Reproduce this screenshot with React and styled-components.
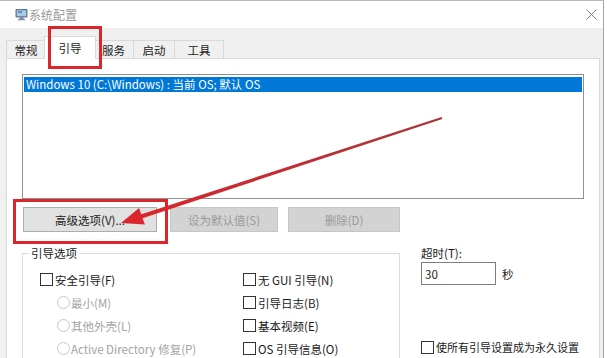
import React from "react";
import styled, { createGlobalStyle } from "styled-components";

const GlobalStyle = createGlobalStyle`
  html, body {
    margin: 0;
    padding: 0;
    background: #fff;
  }
  body {
    font-family: "Noto Sans CJK SC", "Noto Sans", sans-serif;
    font-size: 11.5px;
    color: #1a1a1a;
  }
`;

const Window = styled.div`
  position: relative;
  width: 603px;
  height: 357px;
  border-top: 1px solid #b9b9b9;
  border-right: 1px solid #a3a3a3;
  background: #f0f0f0;
  display: flex;
  flex-direction: column;
  overflow: hidden;
`;

const TitleBar = styled.div`
  height: 27px;
  flex-shrink: 0;
  background: #fff;
  display: flex;
  align-items: center;
  padding: 0 6px 0 15px;
`;

const Title = styled.span`
  flex: 1;
  margin-left: 1px;
  font-size: 12px;
  color: #999;
`;

const Body = styled.div`
  flex: 1;
  display: flex;
  flex-direction: column;
  padding: 8px 3px 0 6px;
  min-height: 0;
`;

const TabStrip = styled.div`
  display: flex;
  align-items: flex-end;
  height: 22px;
  position: relative;
  z-index: 1;
`;

const Tab = styled.div`
  box-sizing: border-box;
  width: ${(p) => p.$w}px;
  height: ${(p) => (p.$active ? 23 : 18)}px;
  margin: ${(p) => (p.$active ? "0 -2px -1px -2px" : "0 0 0 -1px")};
  border: 1px solid #d9d9d9;
  border-bottom: none;
  background: ${(p) => (p.$active ? "#fff" : "#f0f0f0")};
  position: relative;
  z-index: ${(p) => (p.$active ? 2 : 1)};
  display: flex;
  align-items: center;
  justify-content: center;
  padding-bottom: ${(p) => (p.$active ? 1 : 0)}px;
  color: #1a1a1a;
  &:first-child {
    margin-left: 0;
  }
`;

const Page = styled.div`
  flex: 1;
  background: #fff;
  border: 1px solid #d9d9d9;
  padding: 15px;
  display: flex;
  flex-direction: column;
`;

const ListBox = styled.div`
  box-sizing: border-box;
  height: 125px;
  border: 1px solid #8f9197;
  padding: 2px 1px;
  background: #fff;
`;

const ListItem = styled.div`
  height: 15px;
  line-height: 15px;
  padding-left: 2px;
  background: #0078d7;
  color: #fff;
  white-space: nowrap;
`;

const ButtonRow = styled.div`
  display: flex;
  margin-top: 8px;
`;

const Button = styled.div`
  box-sizing: border-box;
  width: ${(p) => p.$w}px;
  height: 25px;
  margin-left: ${(p) => p.$ml}px;
  border: 1px solid ${(p) => (p.$disabled ? "#c6c6c6" : "#adadad")};
  background: ${(p) => (p.$disabled ? "#d3d3d3" : "#e1e1e1")};
  color: ${(p) => (p.$disabled ? "#9a9a9a" : "#1a1a1a")};
  display: flex;
  align-items: center;
  justify-content: center;
`;

const Bottom = styled.div`
  display: grid;
  grid-template-columns: 378px 1fr;
  column-gap: 21px;
  margin-top: 13px;
`;

const GroupBox = styled.fieldset`
  margin: 0;
  padding: 0;
  min-width: 0;
  border: 1px solid #dcdcdc;
`;

const Legend = styled.legend`
  margin-left: 6px;
  padding: 0 2px;
  line-height: 16px;
`;

const Options = styled.div`
  display: grid;
  grid-template-columns: 203px 1fr;
  padding: 7px 0 10px 17px;
`;

const OptionColumn = styled.div`
  display: flex;
  flex-direction: column;
`;

const Option = styled.div`
  display: flex;
  align-items: center;
  height: 23px;
  padding-left: ${(p) => p.$indent || 0}px;
  color: ${(p) => (p.$disabled ? "#a3a3a3" : "#1a1a1a")};
  white-space: nowrap;
`;

const CheckBox = styled.span`
  box-sizing: border-box;
  width: 13px;
  height: 13px;
  flex-shrink: 0;
  margin-right: 2px;
  margin-top: ${(p) => p.$top || 0}px;
  border: 1px solid #333;
  background: #fff;
`;

const Radio = styled.span`
  box-sizing: border-box;
  width: 13px;
  height: 13px;
  flex-shrink: 0;
  margin-right: 1px;
  border: 1px solid #c8c8c8;
  border-radius: 50%;
  background: #fff;
`;

const Side = styled.div`
  display: flex;
  flex-direction: column;
`;

const FieldLabel = styled.div`
  line-height: 16px;
`;

const InputRow = styled.div`
  display: flex;
  align-items: center;
  margin-top: 1px;
`;

const TextInput = styled.div`
  box-sizing: border-box;
  width: 75px;
  height: 23px;
  border: 1px solid #7f7f7f;
  padding-left: 3px;
  display: flex;
  align-items: center;
`;

const Unit = styled.span`
  margin-left: 6px;
`;

const PermanentRow = styled.div`
  display: flex;
  align-items: flex-start;
  margin-top: 54px;
  line-height: 16px;
  font-size: 11px;
`;

const Highlight = styled.div`
  position: absolute;
  box-sizing: border-box;
  left: ${(p) => p.$x}px;
  top: ${(p) => p.$y}px;
  width: ${(p) => p.$w}px;
  height: ${(p) => p.$h}px;
  border: 3px solid #db262d;
  pointer-events: none;
  z-index: 5;
`;

const Overlay = styled.svg`
  position: absolute;
  left: 0;
  top: 0;
  pointer-events: none;
  z-index: 6;
`;

function AppIcon() {
  return (
    <svg width="13" height="13" viewBox="0 0 13 13">
      <rect x="0.5" y="1" width="12" height="8.5" rx="1" fill="#5f7893" />
      <rect x="1.8" y="2.3" width="9.4" height="5.9" fill="#a9c9e6" />
      <rect x="3" y="3.5" width="4" height="1.2" fill="#3b6ea5" />
      <rect x="4.5" y="9.5" width="4" height="1.5" fill="#6f8297" />
      <rect x="3" y="11" width="7" height="1.3" fill="#8796a6" />
    </svg>
  );
}

function CloseIcon() {
  return (
    <svg width="11" height="11" viewBox="0 0 11 11">
      <path d="M0.5 0.5 L10.5 10.5 M10.5 0.5 L0.5 10.5" stroke="#808080" strokeWidth="1" />
    </svg>
  );
}

function Arrow() {
  return (
    <Overlay width="607" height="358" viewBox="0 0 607 358">
      <defs>
        <linearGradient id="arrowFill" x1="442" y1="117" x2="121" y2="222" gradientUnits="userSpaceOnUse">
          <stop offset="0" stopColor="#a8353b" />
          <stop offset="1" stopColor="#dc262c" />
        </linearGradient>
      </defs>
      <polygon
        fill="url(#arrowFill)"
        points="441.7,116 442.3,118 142.5,217.2 145,223.5 121,222 139,207 141.3,213.3"
      />
    </Overlay>
  );
}

const tabs = [
  { label: "常规", w: 40 },
  { label: "引导", w: 52, active: true },
  { label: "服务", w: 41 },
  { label: "启动", w: 42 },
  { label: "工具", w: 50 },
];

const leftOptions = [
  { kind: "check", label: "安全引导(F)" },
  { kind: "radio", label: "最小(M)" },
  { kind: "radio", label: "其他外壳(L)" },
  { kind: "radio", label: "Active Directory 修复(P)" },
];

const rightOptions = ["无 GUI 引导(N)", "引导日志(B)", "基本视频(E)", "OS 引导信息(O)"];

export default function App() {
  return (
    <>
      <GlobalStyle />
      <Window>
        <TitleBar>
          <AppIcon />
          <Title>系统配置</Title>
          <CloseIcon />
        </TitleBar>
        <Body>
          <TabStrip>
            {tabs.map((t) => (
              <Tab key={t.label} $w={t.w} $active={t.active}>
                {t.label}
              </Tab>
            ))}
          </TabStrip>
          <Page>
            <ListBox>
              <ListItem>Windows 10 (C:\Windows) : 当前 OS; 默认 OS</ListItem>
            </ListBox>
            <ButtonRow>
              <Button $w={134} $ml={1}>高级选项(V)...</Button>
              <Button $w={108} $ml={13} $disabled>设为默认值(S)</Button>
              <Button $w={112} $ml={10} $disabled>删除(D)</Button>
            </ButtonRow>
            <Bottom>
              <GroupBox>
                <Legend>引导选项</Legend>
                <Options>
                  <OptionColumn>
                    {leftOptions.map((o) =>
                      o.kind === "check" ? (
                        <Option key={o.label}>
                          <CheckBox />
                          {o.label}
                        </Option>
                      ) : (
                        <Option key={o.label} $indent={17} $disabled>
                          <Radio />
                          {o.label}
                        </Option>
                      )
                    )}
                  </OptionColumn>
                  <OptionColumn>
                    {rightOptions.map((label) => (
                      <Option key={label}>
                        <CheckBox />
                        {label}
                      </Option>
                    ))}
                  </OptionColumn>
                </Options>
              </GroupBox>
              <Side>
                <FieldLabel>超时(T):</FieldLabel>
                <InputRow>
                  <TextInput>30</TextInput>
                  <Unit>秒</Unit>
                </InputRow>
                <PermanentRow>
                  <CheckBox $top={2} />
                  <span>使所有引导设置成为永久设置(K)</span>
                </PermanentRow>
              </Side>
            </Bottom>
          </Page>
        </Body>
        <Highlight $x={48} $y={25} $w={54} $h={43} />
        <Highlight $x={13} $y={198} $w={155} $h={45} />
        <Arrow />
      </Window>
    </>
  );
}
